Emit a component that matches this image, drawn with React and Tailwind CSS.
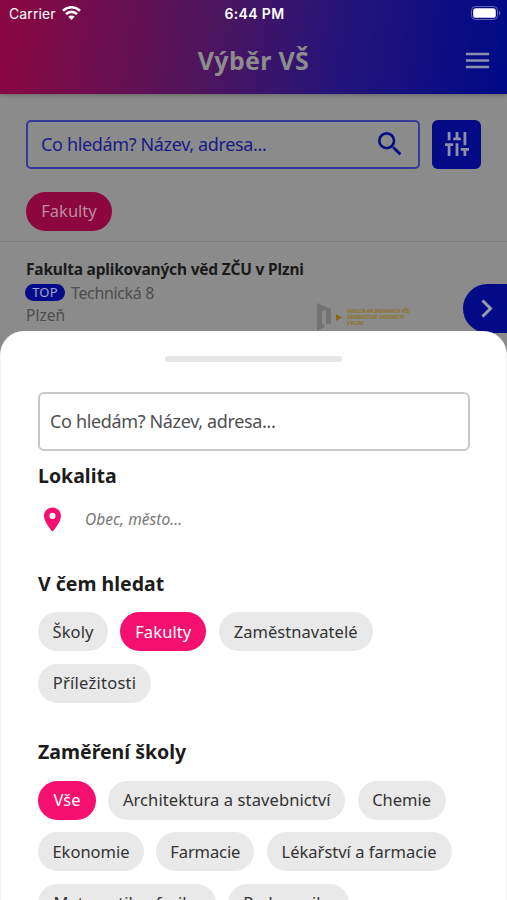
import { MdMenu, MdSearch, MdPlace } from "react-icons/md";

const searchIn = [
  { label: "Školy", size: "w-[70px]", tracking: "tracking-[0.1px]" },
  { label: "Fakulty", size: "w-[86px]", tracking: "tracking-[0.1px]", active: true },
  { label: "Zaměstnavatelé", size: "w-[154px]", tracking: "tracking-[0.05px]" },
  { label: "Příležitosti", size: "w-[113px]", tracking: "tracking-[0.25px]" },
];

const fields = [
  { label: "Vše", size: "w-[58px]", tracking: "tracking-[0px]", active: true },
  { label: "Architektura a stavebnictví", size: "w-[237px]", tracking: "tracking-[0.1px]" },
  { label: "Chemie", size: "w-[88px]", tracking: "tracking-[0px]" },
  { label: "Ekonomie", size: "w-[106px]", tracking: "tracking-[0px]" },
  { label: "Farmacie", size: "w-[98px]", tracking: "tracking-[-0.1px]" },
  { label: "Lékařství a farmacie", size: "w-[185px]", tracking: "tracking-[0px]" },
  { label: "Matematika, fyzika", size: "w-[178px]", tracking: "tracking-[0.1px]" },
  { label: "Pedagogika", size: "w-[121px]", tracking: "tracking-[0px]" },
];

function Chip({ label, size, tracking, active }) {
  return (
    <span
      className={`flex h-[39px] shrink-0 items-center justify-center rounded-full pt-px text-[16.5px] whitespace-nowrap ${size} ${tracking} ${
        active ? "bg-[#f50f6e] text-white" : "bg-[#e9e9e9] text-[#333333]"
      }`}
    >
      {label}
    </span>
  );
}

function Chips({ items }) {
  return (
    <div className="mr-[-20px] flex flex-wrap gap-x-[12.300px] gap-y-[12.500px]">
      {items.map((item) => (
        <Chip key={item.label} {...item} />
      ))}
    </div>
  );
}

function StatusBar() {
  return (
    <div className="grid h-[27px] grid-cols-3 items-center pr-[7px] pl-[9px] font-['Inter',sans-serif] text-[14px] text-white">
      <div className="flex items-center gap-[6px]">
        <span className="tracking-[0.1px]">Carrier</span>
        <svg className="mt-[-2px]" width="19" height="14" viewBox="0 0 19 14" fill="none" stroke="currentColor" strokeWidth="2.6">
          <path d="M1 4.700a12.200 12.200 0 0 1 17 0" />
          <path d="M4 8.100a7.800 7.800 0 0 1 11 0" />
          <path d="M9.500 14 6.300 10.800a4.600 4.600 0 0 1 6.400 0Z" fill="currentColor" stroke="none" />
        </svg>
      </div>
      <span className="text-center font-semibold tracking-[0.35px] whitespace-nowrap">6:44 PM</span>
      <svg className="mt-[-1px] mr-[-1px] justify-self-end" width="30" height="14" viewBox="0 0 30 14">
        <rect x="0.5" y="0.5" width="26" height="13" rx="4" fill="none" stroke="#6468b4" />
        <rect x="2.200" y="2.200" width="22.600" height="9.600" rx="2.600" fill="white" />
        <path d="M28 4.500c1.800.9 1.800 4.100 0 5Z" fill="#6468b4" />
      </svg>
    </div>
  );
}

function SlidersIcon() {
  return (
    <svg width="24" height="24" viewBox="0 0 24 24" fill="#8f8fa9">
      <path d="M2.700 0h2.800v8.200H2.700zM0 11.200h8.200V14H5.500v10H2.700V14H0zM10.600 0h2.800v5.400h2.400v2.800H8.200V5.400h2.400zM10.600 11.200h2.800V24h-2.800zM18.500 0h2.800v13.300h-2.800zM15.800 16H24v2.800h-2.700V24h-2.800v-5.200h-2.700z" />
    </svg>
  );
}

function FacultyLogo() {
  return (
    <div className="flex items-center gap-[5px]">
      <svg width="25" height="28" viewBox="0 0 25 28">
        <path fillRule="evenodd" d="M0 0v28l7-4v-3h7V6ZM5 8.500l4-1.500v14H5Z" fill="#727272" />
        <path d="M19 11v7l6-3.500Z" fill="#8c6908" />
      </svg>
      <div className="text-[4.400px] leading-[6px] font-semibold whitespace-nowrap text-[#8f6c0e]">
        <div>FAKULTA APLIKOVANÝCH VĚD</div>
        <div>ZÁPADOČESKÉ UNIVERZITY</div>
        <div>V PLZNI</div>
      </div>
    </div>
  );
}

export default function App() {
  return (
    <div className="relative h-[900px] w-[507px] overflow-hidden bg-[#8b8b8b] font-['Noto_Sans',sans-serif]">
      <header className="h-[94px] bg-[linear-gradient(98deg,#8c0740_0%,#4f155c_40%,#24147a_67%,#010a86_98%)] shadow-[0_1px_4px_rgba(0,0,0,0.3)]">
        <StatusBar />
        <div className="grid h-[67px] grid-cols-[1fr_auto_1fr] items-center">
          <span />
          <h1 className="text-[25px] font-bold tracking-[0.3px] text-[#8c8c8c]">Výběr VŠ</h1>
          <MdMenu className="mt-[-1px] mr-[14px] justify-self-end text-[31px] text-[#8b8fab]" />
        </div>
      </header>

      <div className="h-[148px] border-b border-[#7b7b7b] px-[26px] pt-[25.500px]">
        <div className="flex gap-[12px]">
          <div className="flex h-[49px] w-[395px] items-center justify-between rounded-[5px] border-2 border-[#36379a] pr-[12px] pl-[13px]">
            <span className="text-[18px] tracking-[-0.35px] text-[#171b86]">Co hledám? Název, adresa...</span>
            <MdSearch className="text-[32px] text-[#040b86]" />
          </div>
          <div className="flex size-[49px] items-center justify-center rounded-[6px] bg-[#020a86]">
            <SlidersIcon />
          </div>
        </div>
        <div className="mt-[23px] flex h-[39px] w-[86px] items-center justify-center rounded-full bg-[#8b073e] pt-px text-[16.500px] text-[#bd8ca0]">
          Fakulty
        </div>
      </div>

      <div className="flex justify-between pt-[16px] pl-[26px]">
        <div>
          <div className="w-[284px] text-[15.500px] leading-[22px] font-bold tracking-[-0.19px] whitespace-nowrap text-[#1a1a1a]">
            Fakulta aplikovaných věd ZČU v Plzni
          </div>
          <div className="flex h-[25px] items-center gap-[6px] text-[16px] tracking-[-0.350px] text-[#4e4e4e]">
            <span className="ml-[-1px] flex h-[17px] w-[40px] items-center justify-center rounded-full bg-[#050b8a] text-[13px] tracking-[0.2px] text-[#a3a5cc]">
              TOP
            </span>
            Technická 8
          </div>
          <div className="text-[15.500px] leading-[21px] text-[#4e4e4e]">Plzeň</div>
        </div>
        <div className="flex">
          <div className="mt-[45px] mr-[53px]">
            <FacultyLogo />
          </div>
          <div className="mt-[26px] flex h-[49px] w-[44px] items-center justify-center rounded-l-full bg-[#020a86] pl-[3px]">
            <svg width="12" height="19" viewBox="0 0 12 19" fill="none" stroke="#9c9caf" strokeWidth="3">
              <path d="m1.500 1.500 8 8-8 8" />
            </svg>
          </div>
        </div>
      </div>

      <section className="absolute top-[331px] right-0 left-0 h-[620px] rounded-t-[24px] border-x border-[#f6f6f6] bg-white px-[37px] pt-[25px]">
        <div className="mx-auto h-[6px] w-[177px] rounded-[3px] bg-[#e6e6e6]" />
        <div className="mt-[30px] flex h-[59px] w-[432px] items-center rounded-[6px] border-2 border-[#c8c8c8] px-[10px] pb-px text-[18px] tracking-[-0.35px] text-[#505050]">
          Co hledám? Název, adresa...
        </div>
        <h2 className="mt-[10px] text-[19.500px] leading-[30px] font-bold text-[#1c1c1c]">Lokalita</h2>
        <div className="mt-[13px] flex h-[30px] items-center">
          <MdPlace className="text-[29px] text-[#f50f6e]" />
          <span className="mt-[2px] ml-[18px] text-[15.500px] tracking-[0.05px] text-[#777777] italic">Obec, město...</span>
        </div>
        <h2 className="mt-[35px] mb-[13px] text-[19.500px] leading-[30px] font-bold text-[#1c1c1c]">V čem hledat</h2>
        <Chips items={searchIn} />
        <h2 className="mt-[34px] mb-[14px] text-[19.500px] leading-[30px] font-bold text-[#1c1c1c]">Zaměření školy</h2>
        <Chips items={fields} />
      </section>
    </div>
  );
}
